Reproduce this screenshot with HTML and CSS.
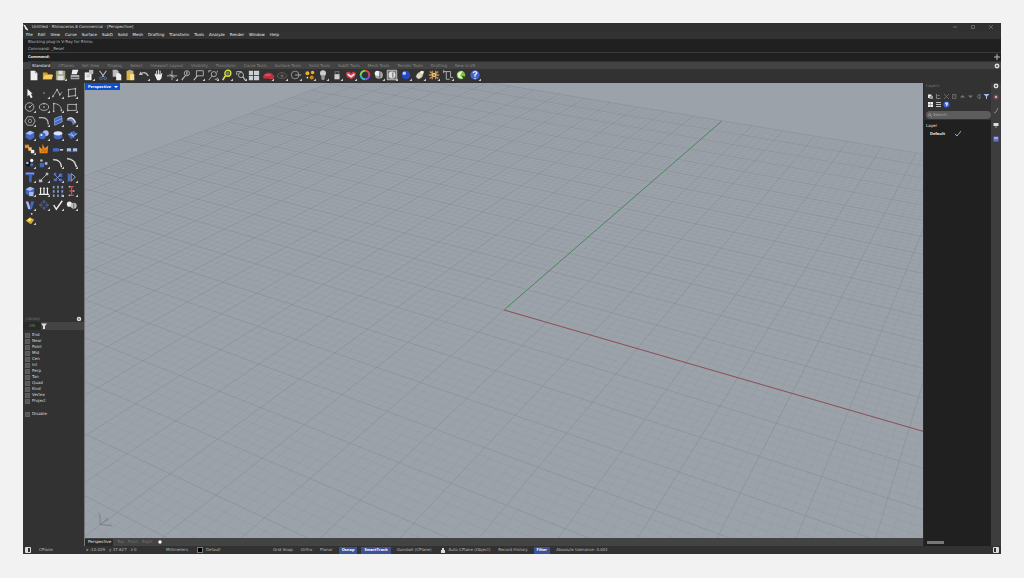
FILE: index.html
```html
<!DOCTYPE html>
<html lang="en">
<head>
<meta charset="utf-8">
<title>Untitled - Rhinoceros 8 Commercial - [Perspective]</title>
<link rel="stylesheet" href="styles.css">
</head>
<body>
<div class="window">
  <header class="titlebar">
    <svg class="app-icon" viewBox="0 0 8 8"><path d="M0 0l3 1 1 2 3 4-1 1-3-2-1-3z" fill="#eee"/></svg>
    <h1 class="title">Untitled - Rhinoceros 8 Commercial - [Perspective]</h1>
    <div class="window-buttons">
      <button aria-label="Minimize"><svg viewBox="0 0 6 6"><path d="M1 3h4" stroke="#666"/></svg></button>
      <button aria-label="Restore"><svg viewBox="0 0 6 6"><path d="M1.500 1.500h3v3h-3z" stroke="#666" fill="none"/></svg></button>
      <button aria-label="Close"><svg viewBox="0 0 6 6"><path d="M1 1l4 4M5 1l-4 4" stroke="#777" stroke-width=".7"/></svg></button>
    </div>
  </header>
  <nav class="menu">
    <button>File</button><button>Edit</button><button>View</button><button>Curve</button><button>Surface</button><button>SubD</button><button>Solid</button><button>Mesh</button><button>Drafting</button><button>Transform</button><button>Tools</button><button>Analyze</button><button>Render</button><button>Window</button><button>Help</button>
  </nav>
  <section class="console">
    <div class="history"><p>Blocking plug-in V-Ray for Rhino.</p><p>Command: _Reset</p></div>
    <div class="prompt">
      <label for="command">Command:</label><input id="command" type="text">
      <button class="edge-button" aria-label="Expand"><svg viewBox="0 0 6 6"><path d="M3 0v6M0 3h6" stroke="#bbb"/></svg></button>
    </div>
  </section>
  <nav class="toolbar-tabs">
    <button class="active">Standard</button><button>CPlanes</button><button>Set View</button><button>Display</button><button>Select</button><button>Viewport Layout</button><button>Visibility</button><button>Transform</button><button>Curve Tools</button><button>Surface Tools</button><button>Solid Tools</button><button>SubD Tools</button><button>Mesh Tools</button><button>Render Tools</button><button>Drafting</button><button>New in V8</button>
    <button class="edge-button" aria-label="Toolbar options"><svg viewBox="0 0 6 6"><circle cx="3" cy="3" r="1.700" stroke="#ddd" stroke-width="1.500" fill="none"/></svg></button>
  </nav>
  <div class="toolbar" id="toolbar"></div>

  <main class="workspace">
    <aside class="left-panel">
      <div class="tools" id="tools"></div>
      <section class="library">
        <div class="library-head"><span>Library</span><button aria-label="Library options"><svg viewBox="0 0 6 6"><circle cx="3" cy="3" r="1.500" stroke="#ddd" stroke-width="1.500" fill="none"/></svg></button></div>
        <div class="filter-row"><button class="filter-all">ON</button><button class="funnel" aria-label="Filter"><svg viewBox="0 0 6 6"><path d="M0 .5h6L4 3v3H2V3z" fill="#ddd"/></svg></button></div>
        <div class="snaps">
          <label><input type="checkbox">End</label>
          <label><input type="checkbox">Near</label>
          <label><input type="checkbox">Point</label>
          <label><input type="checkbox">Mid</label>
          <label><input type="checkbox">Cen</label>
          <label><input type="checkbox">Int</label>
          <label><input type="checkbox">Perp</label>
          <label><input type="checkbox">Tan</label>
          <label><input type="checkbox">Quad</label>
          <label><input type="checkbox">Knot</label>
          <label><input type="checkbox">Vertex</label>
          <label><input type="checkbox">Project</label>
          <label class="disable"><input type="checkbox">Disable</label>
        </div>
      </section>
    </aside>

    <section class="view-column">
      <div class="viewport">
        <svg class="scene" viewBox="85 83 838 456" preserveAspectRatio="xMidYMid slice">
          <path id="grid-minor" class="grid-minor"/>
          <path id="grid-major" class="grid-major"/>
          <path id="axis-x" class="axis-x"/>
          <path id="axis-y" class="axis-y"/>
          <g class="gizmo"><path d="M100 525V515M100 525l11 1M100 525l7-5"/><path d="M98 513l2 2M106 518l2 3M110 525l2 2"/></g>
        </svg>
        <button class="view-title"><span>Perspective</span><svg viewBox="0 0 4 4"><path d="M0 1h4L2 3z" fill="#fff"/></svg></button>
      </div>
      <nav class="view-tabs"><button class="active">Perspective</button><button>Top</button><button>Front</button><button>Right</button><button class="add" aria-label="Add view"><svg viewBox="0 0 6 6"><circle cx="3" cy="3" r="1.700" fill="#fff"/></svg></button></nav>
    </section>

    <aside class="layers">
      <div class="layers-head">
        <h2>Layers</h2>
        <div class="layer-tools" id="layer-tools"></div>
        <label class="search"><svg viewBox="0 0 6 6"><circle cx="2.500" cy="2.500" r="1.700" fill="none" stroke="#ccc" stroke-width=".7"/><path d="M4 4l2 2" stroke="#ccc" stroke-width=".7"/></svg><input type="text" placeholder="Search" aria-label="Search layers"></label>
      </div>
      <table class="layer-table">
        <thead><tr><th>Layer</th><th></th></tr></thead>
        <tbody><tr><td>Default</td><td><svg viewBox="0 0 6 6"><path d="M0 3l2 2 4-5" fill="none" stroke="#ccc" stroke-width=".8"/></svg></td></tr></tbody>
      </table>
      <div class="scroll"></div>
    </aside>

    <nav class="side-tabs">
      <button aria-label="Panel options"><svg viewBox="0 0 6 6"><circle cx="3" cy="3" r="1.700" stroke="#ddd" stroke-width="1.500" fill="none"/></svg></button>
      <button aria-label="Materials"><svg viewBox="0 0 6 6"><circle cx="3" cy="3" r="2.500" fill="#7b4a4e"/><circle cx="3" cy="3" r="1" fill="#e7cccc"/></svg></button>
      <button aria-label="Properties"><svg viewBox="0 0 6 6"><path d="M1 5l2-1 2-4" stroke="#888" fill="none"/></svg></button>
      <button aria-label="Display"><svg viewBox="0 0 6 6"><path d="M.5 1h5v3h-5z" fill="#ddd"/><path d="M2 5h2" stroke="#999"/></svg></button>
      <button aria-label="Layers"><svg viewBox="0 0 6 6"><path d="M.5.5h5v5h-5z" fill="#6570d8"/><path d="M1 2h4" stroke="#dde"/></svg></button>
    </nav>
  </main>

  <footer class="status">
    <button class="pane-toggle" aria-label="Toggle left panel"><svg viewBox="0 0 6 6"><path d="M.5.5h5v5h-5z" stroke="#ddd" fill="none"/><path d="M1 1h2v4H1z" fill="#ddd"/></svg></button>
    <span class="cplane">CPlane</span>
    <span class="coords"><span>x -10.029</span><span>y 37.627</span><span>z 0</span></span>
    <span class="units">Millimeters</span>
    <button class="layer"><i class="swatch"></i>Default</button>
    <div class="toggles">
      <button>Grid Snap</button><button>Ortho</button><button>Planar</button><button class="on">Osnap</button><button class="on">SmartTrack</button><button>Gumball (CPlane)</button>
      <button class="locked"><svg viewBox="0 0 6 6"><path d="M1 3h4v3H1zM2 3V1h2v2" fill="#ddd"/></svg>Auto CPlane (Object)</button>
      <button>Record History</button><button class="on">Filter</button>
      <span>Absolute tolerance: 0.001</span>
    </div>
    <button class="pane-toggle right" aria-label="Toggle right panel"><svg viewBox="0 0 6 6"><path d="M.5.5h5v5h-5z" stroke="#ddd" fill="none"/><path d="M3 1h2v4H3z" fill="#ddd"/></svg></button>
  </footer>
</div>
<script src="app.js"></script>
</body>
</html>
```
FILE: styles.css
```css
* { box-sizing: border-box; }
body {
  margin: 0;
  padding: 23px 23px 24px;
  min-height: 100vh;
  display: flex;
  background: #f2f2f2;
  font: 4px/6px "DejaVu Sans", sans-serif;
  color: #ccc;
}
button, input {
  margin: 0; padding: 0; border: 0;
  background: none; color: inherit; font: inherit; outline: none;
}
button { display: flex; align-items: center; white-space: nowrap; }
h1, h2, p { margin: 0; font: inherit; }
svg { display: block; flex: none; }
button > svg { width: 6px; height: 6px; }

.window { flex: 1; min-width: 0; display: flex; flex-direction: column; background: #323232; }
.titlebar { height: 8px; display: flex; align-items: center; gap: 3px; background: #303030; }
.app-icon { width: 6px; height: 7px; }
.title { flex: 1; color: #ddd; }
.window-buttons { display: flex; gap: 12px; padding-right: 7px; }
.menu { height: 8px; display: flex; align-items: center; gap: 5px; padding-left: 3px; color: #eee; }

.console { background: #202020; padding-left: 5px; color: #bbb; }
.history { height: 14px; border-bottom: 1px solid #3c3c3c; display: flex; flex-direction: column; }
.history p { height: 7px; }
.prompt { height: 9px; display: flex; align-items: center; gap: 2px; color: #eee; font-weight: 600; border-bottom: 1px solid #333; }
.prompt, .view-title, .toggles .on, .layer-table td:first-child { font-family: "Open Sans", sans-serif; font-weight: 700; }
.prompt input { flex: 1; min-width: 0; height: 6px; }
.edge-button { width: 8px; justify-content: center; }

.toolbar-tabs { height: 7px; display: flex; align-items: center; gap: 8px; padding-left: 9px; background: #434343; color: #858585; }
.toolbar-tabs .active { color: #eee; background: #323232; box-shadow: 0 0 0 1px #323232; }
.toolbar-tabs .edge-button { margin-left: auto; }
.toolbar { height: 14px; max-width: 459px; padding: 0 0 2px 4px; display: grid; grid-template-columns: repeat(33, minmax(0, 1fr)); align-items: center; }
.tool { justify-content: center; }
.tool svg { width: 12px; height: 12px; }

.workspace { flex: 1; min-height: 0; display: flex; }
.left-panel { flex: 0 0 61px; display: flex; flex-direction: column; }
.tools { padding-top: 3px; display: grid; grid-template-columns: repeat(4, 14px); grid-auto-rows: 14px; }
.library { margin-top: auto; height: 231px; }
.library-head { height: 7px; display: flex; align-items: center; justify-content: space-between; padding: 0 2px 0 3px; color: #777; }
.filter-row { height: 8px; display: flex; align-items: center; color: #777; }
.filter-all { width: 18px; height: 8px; justify-content: center; background: #292929; }
.funnel { flex: 1; height: 8px; background: #444; }
.snaps { display: flex; flex-direction: column; padding: 2px 2px 0; color: #ddd; }
.snaps label { display: flex; align-items: center; gap: 2px; height: 6px; }
.snaps .disable { margin-top: 7px; }
.snaps input { appearance: none; width: 5px; height: 5px; background: #555; border: 1px solid #606060; }

.view-column { flex: 1; min-width: 0; display: flex; flex-direction: column; border-left: 1px solid #777; }
.viewport { flex: 1; min-height: 0; position: relative; overflow: hidden; background: #9ba2aa; }
.scene { position: absolute; inset: 0; width: 100%; height: 100%; }
.grid-minor, .grid-major, .axis-x, .axis-y, .gizmo { fill: none; }
.grid-minor { stroke: #8a9097; stroke-width: .5; opacity: .45; }
.grid-major { stroke: #7f858c; stroke-width: .8; opacity: .55; }
.axis-x { stroke: #905158; }
.axis-y { stroke: #4c8c61; }
.gizmo { stroke: #747981; stroke-width: .8; }
.view-title { position: absolute; left: 0; top: 0; height: 7px; padding: 0 2px 0 3px; gap: 3px; background: #0b50cf; color: #fff; }
.view-title svg { width: 4px; height: 4px; }
.view-tabs { height: 8px; display: flex; align-items: center; gap: 4px; background: #434343; color: #777; }
.view-tabs .active { color: #eee; background: #2a2a2a; padding: 0 2px 0 3px; height: 7px; }

.layers { flex: 0 0 68px; display: flex; flex-direction: column; background: #202020; border-left: 1px solid #2a2a2a; }
.layers-head { background: #323232; padding: 0 0 1px 2px; }
.layers-head h2 { color: #777; height: 9px; }
.layer-tools { display: grid; grid-template-columns: repeat(8, 1fr); }
.layer-tools button { height: 8px; justify-content: center; }
.layer-tools svg { width: 7px; height: 7px; }
.search { display: flex; align-items: center; gap: 1px; height: 8px; margin-top: 3px; padding: 0 2px; border-radius: 4px; background: #5c5c5c; }
.search svg { width: 4px; height: 4px; }
.search input { width: 100%; min-width: 0; height: 6px; }
.search input::placeholder { color: #aaa; opacity: 1; }
.layer-table { width: 100%; margin-top: 2px; border-collapse: collapse; color: #eee; }
.layer-table th, .layer-table td { padding: 0 0 0 2px; height: 8px; text-align: left; font-weight: 400; }
.layer-table th:first-child { width: 29px; }
.layer-table td:first-child { padding-left: 6px; font-weight: 700; }
.layer-table svg { width: 6px; height: 6px; }
.scroll { width: 17px; height: 3px; margin: auto 0 2px 3px; background: #777; }
.side-tabs { flex: 0 0 10px; display: flex; flex-direction: column; align-items: center; gap: 8px; background: #3d3d3d; }
.side-tabs button:first-child { margin-bottom: -3px; }

.status { height: 8px; display: flex; align-items: center; color: #bbb; background: #323232; }
.pane-toggle { width: 16px; padding-left: 2px; }
.cplane { width: 47px; }
.coords { width: 80px; display: flex; gap: 4px; }
.units { width: 31px; }
.layer { width: 76px; gap: 3px; }
.swatch { width: 6px; height: 6px; background: #000; border: 1px solid #777; }
.toggles { display: flex; align-items: center; gap: 8px; white-space: nowrap; }
.toggles .on { height: 7px; margin: 0 -2px; padding: 0 3px; color: #fff; background: #3d5196; }
.toggles .locked { gap: 3px; }
.pane-toggle.right { width: 10px; margin-left: auto; }
```
FILE: app.js
```js
// Icons are drawn on a 14 x 14 field.
const p = (d, fill) => `<path d="${d}" fill="${fill}"/>`;
const s = (d, stroke, w = 1) => `<path d="${d}" fill="none" stroke="${stroke}" stroke-width="${w}"/>`;
const c = (x, y, r, fill) => `<circle cx="${x}" cy="${y}" r="${r}" fill="${fill}"/>`;
const ring = (x, y, r, stroke, w = 1) => `<circle cx="${x}" cy="${y}" r="${r}" fill="none" stroke="${stroke}" stroke-width="${w}"/>`;
const G = '#bbb', W = '#eee', B = '#4468c8', L = '#a9bcf0', O = '#e88a20';
const flyout = p('M14 11v3h-3z', '#ccc');

const standard = [
  ['New', p('M3 2h5l3 3v8H3z', W) + p('M8 2v3h3z', '#999')],
  ['Open', p('M1 4h5l1 2h5v6H1z', '#d79a28') + p('M3 7h10l-2 5H1z', '#f6cf62')],
  ['Save', p('M1 2h11v11H1z', '#9ba07c') + p('M4 2h5v4H4zM3 8h7v5H3z', '#ddd'), 1],
  ['Print', p('M2 7h10v5H2z', '#aaa') + p('M4 1h7l-2 5H3z', W) + s('M3 10h8', '#444')],
  ['Properties', p('M2 4h8v9H2z', W) + p('M7 1h5v5H7z', '#bbb') + s('M4 7h4M4 9h4', '#aaa'), 1],
  ['Cut', s('M3 2l5 7M11 2L6 9', '#bbb', 1.3) + ring(4.500, 11, 1.500, '#5577c9') + ring(9.500, 11, 1.500, '#5577c9')],
  ['Copy', p('M2 1h5l2 2v6H2z', '#bbb') + p('M6 5h4l2 2v6H6z', W)],
  ['Paste', p('M3 2h8v11H3z', '#e0b43c') + p('M5 1h4v3H5z', '#aaa') + p('M7 6h5v7H7z', '#f4df98')],
  ['Undo', s('M3 6c3-3 7-2 9 2', G, 1.5) + p('M1 7l2-4 3 4z', G), 1],
  ['Pan', p('M3 6l1-1 1 2V2h1v4h1V1h1v5h1V2h1v5l1-2h1l-1 6-2 2H6z', W)],
  ['Rotate View', s('M7 2v11M1 8h12M4 6l6 4', G), 1],
  ['Zoom Dynamic', ring(8, 5, 3, G) + s('M6 8l-4 5M8 3v4', G, 1.3), 0],
  ['Zoom Window', s('M4 2h8v6H4z', G) + s('M5 8l-4 5', G, 1.4), 1],
  ['Zoom Extents', ring(8, 6, 3, G) + s('M6 8l-4 5M2 4V2h3M12 2v2M12 10v2h-3', G), 1],
  ['Zoom Selected', ring(8, 5, 3.500, '#d9dc45', 1.6) + c(8, 5, 2, '#738343') + s('M5 8l-3 5', '#d9dc45', 2), 1],
  ['Undo View', s('M2 3h6M2 3v4', G) + ring(7, 7, 3, G) + s('M9 9l3 4', G, 1.4), 1],
  ['4 Viewports', p('M1 2h5v5H1zM7 2h6v5H7zM1 8h5v5H1zM7 8h6v5H7z', '#cbd0d5')],
  ['Right View', p('M1 9l2-3 4-2 4 1 3 3v3l-4 1-3-1H2z', '#c22f3c') + s('M3 7h7', '#e77', 1), 1],
  ['Set CPlane', s('M1 8c3-5 9-5 12 0-3 4-9 4-12 0', '#666') + c(7, 8, 2, '#755'), 1],
  ['Object Snap', ring(6, 7, 4.500, '#999') + s('M6 7h7', '#bbb'), 1],
  ['Select', c(4, 5, 2.300, '#e7b12d') + c(10, 4, 2, '#e7b12d') + c(9, 10, 2.300, '#c58b22') + c(4, 10, 1, W), 1],
  ['Hide', c(7, 5, 3.500, '#ccc') + p('M5 7h4v5l-2 1-2-1z', '#999'), 1],
  ['Lock', p('M4 6h6v6H4z', '#ccc') + s('M5 6V3h4v3', '#666', 1.400), 1],
  ['Layers', p('M1 4l4-1 2 2 3-2 3 2-2 5-4 2-5-3z', '#d53b48') + s('M3 6l4 3 4-3', W, 1.800), 1],
  ['Colors', s('M7 2a5 5 0 0 1 5 5', '#ef3d55', 2.400) + s('M12 7a5 5 0 0 1-5 5', '#7b4ee0', 2.400) + s('M7 12a5 5 0 0 1-5-5', '#25b9d5', 2.400) + s('M2 7a5 5 0 0 1 5-5', '#7bd544', 2.400)],
  ['Shaded', c(7, 7, 4.500, '#aaa') + c(5, 5, 3, W) + s('M8 3v8', '#555'), 1],
  ['Rendered', p('M1 1h12v12H1z', '#777') + s('M1.500 1.500h11v11h-11z', '#bbb') + c(7, 7, 4, '#ddd') + s('M8 4v6', '#555'), 1],
  ['Render', c(7, 7, 5, '#2648c4') + c(5, 5, 2, '#b9c9ff'), 1],
  ['Spotlight', p('M2 9l3-5 7-2-2 7-5 3z', '#b8b2a0') + c(6, 8, 3, '#ddd8c8') + c(9, 4, 2, '#fff0c0'), 1],
  ['Options', s('M2 3l10 8M12 3L2 11M1 7h12M5 2v10M9 2v10', '#c5934c', 1.500) + c(7, 7, 2.500, '#e7c88c') + c(7, 7, 1, '#444'), 1],
  ['Dimension', s('M2 3h8v7h3M2 1v4M5 3v9h4', G), 1],
  ['Grasshopper', c(7, 7, 5, '#78c34a') + p('M3 5l6-3-3 6 4 3-6-1z', '#e7f6c0') + p('M8 8l5 1-3 3z', '#274d25')],
  ['Help', c(7, 7, 5.500, '#4262cf') + s('M5 5c0-3 5-2 4 0L7 7v2', W, 1.500) + c(7, 11, .9, W), 1]
];

const cube = p('M2 5l5-3 5 2v6l-5 3-5-3z', B) + p('M2 5l5-3 5 2-5 3z', L);
const dots = pts => pts.map(q => c(q[0], q[1], 1, G)).join('');
const modeling = [
  ['Pointer', p('M4 2l6 6H8l2 4-2 1-2-4-2 2z', W), 0],
  ['Point', c(7, 7, 1, '#999')],
  ['Polyline', s('M1 11L6 3l3 6 3-3', G) + dots([[1, 11], [6, 3], [9, 9]])],
  ['Control points', s('M3 3l8-1v8l-8 1z', G) + dots([[3, 3], [11, 2], [11, 10], [3, 11]])],
  ['Circle', ring(6.500, 7, 5, G) + c(6.500, 7, 1, G) + s('M7 7l3-3', G)],
  ['Ellipse', '<ellipse cx="7" cy="7" rx="5.500" ry="4" fill="none" stroke="#bbb"/>' + dots([[7, 7], [7, 3]])],
  ['Arc', s('M2 3c5 0 9 3 9 8M2 3v9', G) + dots([[2, 3], [2, 12], [11, 11]])],
  ['Rectangle', s('M2 4h10v7H2z', G) + dots([[2, 11], [12, 4]])],
  ['Polygon', s('M4 2h6l3 5-3 5H4L1 7z', G) + ring(7, 7, 2, '#999')],
  ['Fillet', s('M1 3h4c5 0 7 3 7 8', G, 1.500)],
  ['Surface', p('M3 4l8-3 1 7-9 4z', B) + s('M3 4l8-3 1 7-9 4zM3 8l9-4', L, .7)],
  ['Loft', p('M1 5c4-5 8-3 11 4l-4 3C7 7 5 6 1 7z', '#6b7fba') + s('M2 5c4-4 8 0 9 4', W, 1.500)],
  ['Box', cube],
  ['Spheres', c(9, 5, 3.500, L) + c(5, 8, 4, B) + c(4, 7, 1.300, W)],
  ['Cylinder', p('M2 5h10v5c-2 3-8 3-10 0z', B) + '<ellipse cx="7" cy="5" rx="5" ry="2.500" fill="#dbe3ff"/>'],
  ['Mesh', p('M2 6l7-4 4 4-7 6z', B) + s('M3 6l6 2 4-3M6 4l3 6', L)],
  ['Join', p('M1 2h5v4H1z', O) + p('M5 5h4v4H5z', '#f4c676') + p('M8 8h4v4H8z', W)],
  ['Explode', p('M2 12L1 4l4 3V1l3 5 4-3-1 9z', O) + s('M4 11l2-4 2 4 2-4', '#b95a12'), 0],
  ['Trim', p('M1 6h7v4H1z', B) + s('M9 8h4', W, 1.500), 0],
  ['Split', p('M1 6h5v4H1zM8 6h5v4H8z', L) + s('M1 10h12', B), 0],
  ['Group', c(5, 8, 3, '#111') + c(4, 7, 1.500, L) + c(9, 4, 2, W) + c(9, 9, 2, B)],
  ['Ungroup', p('M2 7h5v5H2z', B) + p('M8 6h3v3H8z', L) + c(4, 4, 1.500, G)],
  ['Curve', s('M2 3c6 0 9 4 9 9', W, 1.500) + c(2, 3, 1, G)],
  ['Blend', s('M2 2c7 1 8 4 10 9', W, 1.500) + dots([[2, 2], [6, 3], [10, 6], [12, 11]])],
  ['Text', p('M2 2h10v3H9v8H6V5H2z', B) + s('M2 2.500h10', L)],
  ['Move', s('M3 11l8-8', G) + p('M1 10h4v3H1zM9 2h3v3H9z', G)],
  ['Copy objects', p('M2 2h3v3H2zM8 3h4v4H8zM2 9h4v3H2zM8 9h4v3H8z', B) + s('M3 4l7 7M10 4L4 10', L, .7)],
  ['Scale', p('M2 2l3 2v7l-3 2z', B) + s('M6 3l5 4-5 5z', L)],
  ['Boolean', cube + p('M6 8h5v5H6z', L)],
  ['Extrude', s('M3 3v8M7 3v8M11 3v8M1 11h12', W, 1.400) + s('M2 4h2M6 4h2M10 4h2', W)],
  ['Array', [2, 7, 12].map(x => [2, 7, 12].map(y => p(`M${x - 1} ${y - 1}h2v3h-2z`, '#899ac7')).join('')).join('')],
  ['Orient', s('M4 2h5M4 7h5M4 12h5M6.500 2v10', '#c44f57', 1.500) + dots([[4, 2], [9, 7], [4, 12]])],
  ['Cage', p('M2 3l3 9h3L5 3z', L) + p('M8 3h4l-3 9H7z', B)],
  ['History', ring(7, 7, 4, '#4f5a80') + s('M7 1v12M1 7h12', '#66729c') + c(7, 7, 1.500, '#27325b')],
  ['Check', s('M2 7l3 5 7-10', W, 1.700)],
  ['Block', c(4, 6, 3, W) + c(9, 8, 3.500, G) + s('M9 5v6', '#666')],
  ['Analyze', p('M2 9l5-4 5 3-4 5z', '#d2a93b') + p('M4 8l3-2 2 2-3 2z', '#f9ed6b') + c(9, 1, 1, W)]
];

const layerTools = [
  ['New layer', p('M2 3h7v7H2z', W) + p('M5 6h7v6H5z', '#999')],
  ['New sublayer', s('M3 2v9h8M5 5h4', '#999', 1.500)],
  ['Delete', s('M2 2l10 10M12 2L2 12', '#777', 1.500)],
  ['Copy', s('M3 3h7v8H3zM5 6h4', '#777', 1.500)],
  ['Up', p('M2 9l5-5 5 5z', '#777')],
  ['Down', p('M2 5h10l-5 5z', '#777')],
  ['Left', s('M9 2L5 7l4 5M10 2v10', '#888', 1.500)],
  ['Filter', p('M1 2h12L8 7v5H6V7z', L)],
  ['Grid', p('M2 2h10v10H2z', W) + s('M2 7h10M7 2v10', '#777')],
  ['List', s('M2 3h10M2 7h10M2 11h10', W, 1.500)],
  ['Help', c(7, 7, 6, '#4462d0') + p('M4 3h6v3L8 10H6V7L4 5z', '#cfdcff')]
];

const fill = (id, list, markAll) => {
  document.getElementById(id).innerHTML = list.map(([name, art, fly]) => {
    const mark = fly || (markAll && fly !== 0) ? flyout : '';
    return `<button class="tool-button ${id === 'layer-tools' ? '' : 'tool'}" aria-label="${name}"><svg viewBox="0 0 14 14">${art}${mark}</svg></button>`;
  }).join('');
};
fill('toolbar', standard, false);
fill('tools', modeling, true);
fill('layer-tools', layerTools, false);

// Construction plane in two-point perspective, 14 major cells each way.
const origin = [504, 310.5], vx = [-1294, -210], vy = [1104, -210];
const u = -0.0230, v = 0.04076, N = 14;
const project = (x, y) => {
  const w = 1 + u * x + v * y;
  return [0, 1].map(i => ((origin[i] + u * x * vx[i] + v * y * vy[i]) / w).toFixed(1)).join(' ');
};
const line = (a, b, x, y) => `M${project(a, b)}L${project(x, y)}`;
let minor = '', major = '';
for (let i = -N * 5; i <= N * 5; i++) {
  const k = i / 5, d = line(k, -N, k, N) + line(-N, k, N, k);
  if (i % 5) minor += d; else major += d;
}
const draw = (id, d) => document.getElementById(id).setAttribute('d', d);
draw('grid-minor', minor);
draw('grid-major', major);
draw('axis-x', line(0, 0, N, 0));
draw('axis-y', line(0, 0, 0, N));
```
